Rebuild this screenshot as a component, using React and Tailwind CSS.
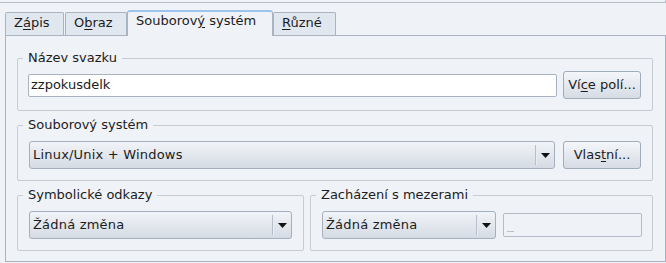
const TABS = [
  { pre: 'Z', key: 'á', post: 'pis', w: 'w-[59px]', ml: 'ml-0' },
  { pre: 'O', key: 'b', post: 'raz', w: 'w-[62px]', ml: 'ml-[1px]' },
  { pre: 'Souborov', key: 'ý', post: ' systém', w: 'w-[146px]', active: true },
  { pre: '', key: 'R', post: 'ůzné', w: 'w-[63px]', ml: 'ml-0' },
]

function Tab({ tab }) {
  if (tab.active) {
    return (
      <div className={`${tab.w} h-[26px] -mb-px relative z-10 self-end rounded-t-[3px] border-t-2 border-x border-t-[#9cc4ee] border-x-[#aab3c1] bg-[#eff2f7] pl-[8px] pt-[1px] leading-[16px]`}>
        {tab.pre}<span className="underline underline-offset-2">{tab.key}</span>{tab.post}
      </div>
    )
  }
  return (
    <div className={`${tab.w} ${tab.ml} h-[23px] self-end rounded-t-[2px] border-t border-x border-[#aab3c1] bg-[#e1e7ef] pl-[8px] pt-[2px] leading-[16px]`}>
      {tab.pre}<span className="underline underline-offset-2">{tab.key}</span>{tab.post}
    </div>
  )
}

function Group({ title, className = '', children }) {
  return (
    <fieldset className={`border border-[#c5ccd6] rounded-[2px] ${className}`}>
      <legend className="ml-[5px] px-[5px] leading-[16px]">{title}</legend>
      {children}
    </fieldset>
  )
}

function Button({ pre, keyChar, post }) {
  return (
    <button className="w-[78px] h-[28px] shrink-0 rounded-[3px] border border-[#a1acbb] bg-gradient-to-b from-[#f4f6f9] to-[#d6dce5] leading-[16px] text-center">
      {pre}<span className="underline underline-offset-2">{keyChar}</span>{post}
    </button>
  )
}

function Combo({ value, className = '' }) {
  return (
    <div className={`h-[28px] flex items-center rounded-[3px] border border-[#a5afbe] bg-gradient-to-b from-[#f1f4f8] to-[#d5dbe4] ${className}`}>
      <span className="flex-1 pl-[3px] leading-[16px] tracking-[0.2px]">{value}</span>
      <div className="w-px h-[20px] bg-[#b7bfcb] border-r border-white/70 box-content" />
      <div className="w-[17px] flex justify-center">
        <svg width="9" height="5" viewBox="0 0 9 5">
          <path d="M0 0 L9 0 L4.5 5 Z" fill="#111" />
        </svg>
      </div>
    </div>
  )
}

export default function App() {
  return (
    <div className="w-[666px] h-[263px] bg-[#eff2f7] text-[13px] text-[#1c1c1c] font-['DejaVu_Sans',sans-serif] overflow-hidden">
      {/* frame above */}
      <div className="h-[3px] border-b border-r border-[#b6bfcb]" />

      {/* tabs */}
      <div className="flex items-end h-[25px] mt-[7px] pl-[5px]">
        {TABS.map((t, i) => <Tab key={i} tab={t} />)}
      </div>

      {/* pane */}
      <div className="ml-[5px] w-[661px] h-[227px] border border-[#aab3c1] pt-[14px] pl-[11px] pr-[12px]">
        <Group title="Název svazku" className="pb-[11px]">
          <div className="flex items-center gap-[6px] pt-[5px] pl-[10px] pr-[11px]">
            <div className="flex-1 h-[23px] border border-[#a9b2c0] rounded-[2px] bg-white pl-[2px] flex items-center leading-[16px]">
              zzpokusdelk
            </div>
            <Button pre="Ví" keyChar="c" post="e polí..." />
          </div>
        </Group>

        <Group title="Souborový systém" className="mt-[6px] pb-[11px]">
          <div className="flex items-center gap-[8px] pt-[8px] pl-[11px] pr-[11px]">
            <Combo value="Linux/Unix + Windows" className="flex-1" />
            <Button pre="Vlas" keyChar="t" post="ní..." />
          </div>
        </Group>

        <div className="flex gap-[6px] mt-[6px]">
          <Group title="Symbolické odkazy" className="w-[287px] pb-[11px]">
            <div className="pt-[8px] px-[11px]">
              <Combo value="Žádná změna" />
            </div>
          </Group>
          <Group title="Zacházení s mezerami" className="flex-1 pb-[11px]">
            <div className="flex items-center gap-[7px] pt-[8px] pl-[11px] pr-[10px]">
              <Combo value="Žádná změna" className="w-[174px]" />
              <div className="flex-1 h-[24px] border border-[#b4bcc9] rounded-[2px] flex items-end pl-[3px] pb-[4px]">
                <div className="w-[7px] h-px bg-[#b9c0cb]" />
              </div>
            </div>
          </Group>
        </div>
      </div>
    </div>
  )
}
